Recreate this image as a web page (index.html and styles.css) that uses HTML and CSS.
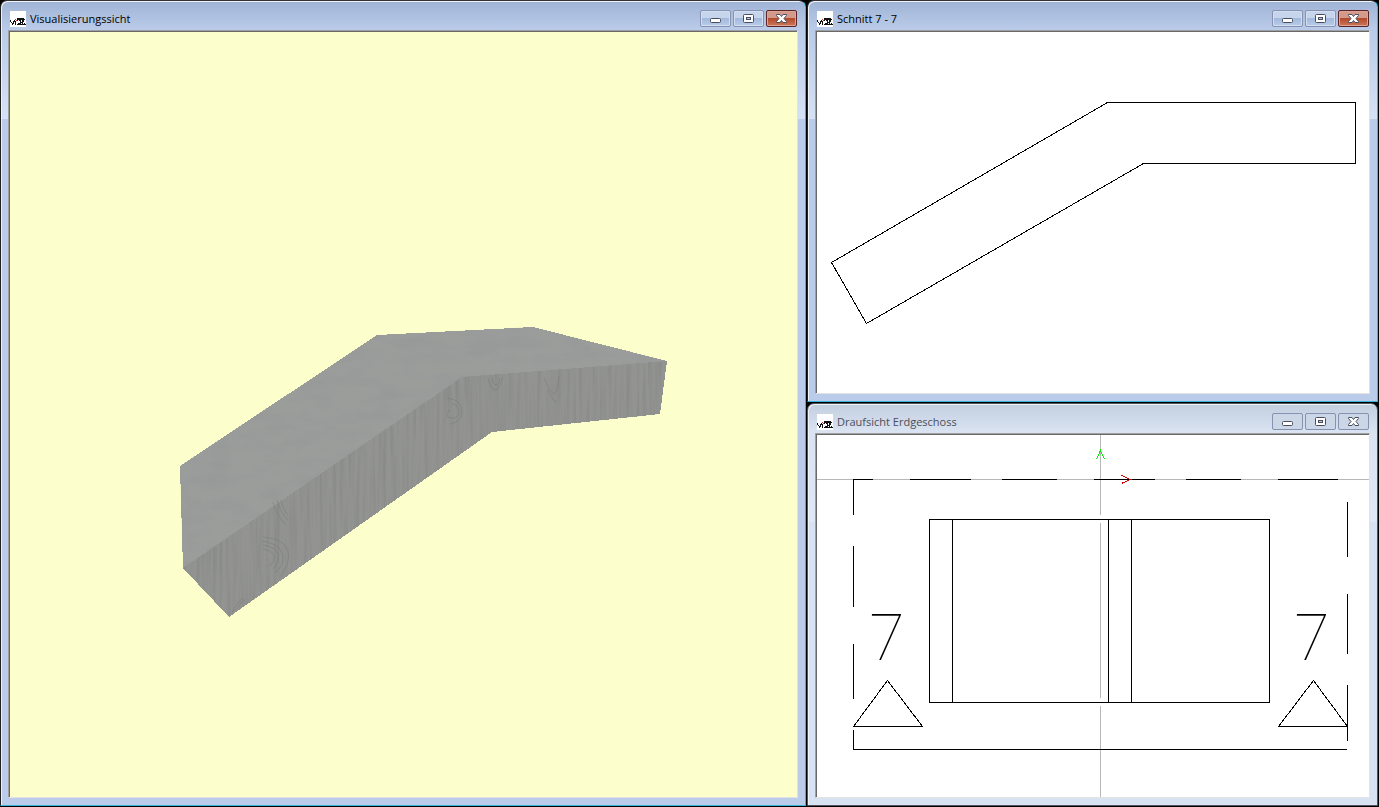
FILE: index.html
```
<!DOCTYPE html>
<html lang="de">
<head>
<meta charset="utf-8">
<title>Visualisierungssicht</title>
<link rel="stylesheet" href="styles.css">
</head>
<body>

<!-- shared symbols -->
<svg class="defs" width="0" height="0" aria-hidden="true">
  <symbol id="logo" viewBox="0 0 16 16" shape-rendering="crispEdges">
    <rect width="16" height="16" fill="#fff"/>
    <path d="M0 9h1v2h1v1h1v-2h1v-1h1v2h-1v2h-1v1h-1v-2h-1v-1h-1z M5 10h1v4h-1z M7 7h7v1h1v1h-1v2h-1v2h2v1h-8v-1h1v-1h1v-1h1v-1h-3z M14 12h1v1h1v1h-2z" fill="#111"/>
    <path d="M5 8h1v1h-1z M6 9h1v1h-1z" fill="#d33"/>
    <path d="M8 9h1v1h-1z M11 9h1v2h-1z M11 12h1v1h-1z M9 11h1v1h-1z" fill="#fff"/>
  </symbol>
  <symbol id="min" viewBox="0 0 13 11">
    <rect x="1.5" y="5.5" width="10" height="4" rx="1" fill="#fff" stroke="#4a4d5e"/>
  </symbol>
  <symbol id="max" viewBox="0 0 13 11">
    <rect x="1.5" y="1.5" width="10" height="8" rx="1" fill="#fff" stroke="#4a4d5e"/>
    <rect x="4.5" y="4.5" width="4" height="2" fill="#b9cbe4" stroke="#4a4d5e"/>
  </symbol>
  <symbol id="close" viewBox="0 0 13 11">
    <path d="M1.5 1.5h3.500l1.500 2l1.500-2h3.500v1l-2.500 3l2.500 3v1h-3.500l-1.500-2l-1.500 2h-3.500v-1l2.500-3l-2.500-3z" fill="#fff" stroke="#4a4d5e" stroke-linejoin="round"/>
  </symbol>
</svg>

<main class="desktop">

  <section class="window active wide">
    <header class="titlebar">
      <svg class="logo"><use href="#logo"/></svg>
      <h1 class="title">Visualisierungssicht</h1>
      <button class="btn" type="button" aria-label="Minimieren"><svg class="glyph"><use href="#min"/></svg></button>
      <button class="btn" type="button" aria-label="Maximieren"><svg class="glyph"><use href="#max"/></svg></button>
      <button class="btn close" type="button" aria-label="Schließen"><svg class="glyph"><use href="#close"/></svg></button>
    </header>
    <div class="view yellow">
      <svg class="drawing" viewBox="10 32 787 765">
        <defs>
          <filter id="grainTop" x="0" y="0" width="100%" height="100%">
            <feTurbulence type="fractalNoise" baseFrequency="0.03 0.08" numOctaves="4" seed="4"/>
            <feColorMatrix values="0 0 0 0 .28  0 0 0 0 .3  0 0 0 0 .3  1 0 0 0 -.36"/>
            <feComposite in2="SourceGraphic" operator="in"/>
          </filter>
          <filter id="grainSide" x="0" y="0" width="100%" height="100%">
            <feTurbulence type="fractalNoise" baseFrequency="0.3 0.012" numOctaves="3" seed="9"/>
            <feColorMatrix values="0 0 0 0 .22  0 0 0 0 .23  0 0 0 0 .22  1.3 0 0 0 -.5"/>
            <feComposite in2="SourceGraphic" operator="in"/>
          </filter>
        </defs>
        <g shape-rendering="crispEdges">
          <path d="M180 466L377 335L533 327L667 361L462 377L183 568z" fill="#9b9d9b"/>
          <path d="M183 568L462 377L667 361L660 414L492 432L229 617z" fill="#939492"/>
        </g>
        <path d="M180 466L377 335L533 327L667 361L462 377L183 568z" filter="url(#grainTop)"/>
        <path d="M183 568L462 377L667 361L660 414L492 432L229 617z" filter="url(#grainSide)"/>
        <g class="knot">
          <path d="M273 502q4 14 12 22M277 500q4 14 11 20M281 500q2 10 7 15"/>
          <path d="M262 541q16 2 20 12t-7 20M263 545q13 2 15 9t-5 15M263 549q10 2 11 7t-4 10M263 537q22 2 25 14t-8 26"/>
          <path d="M232 613q4-10 11-15M237 609q3-7 9-10"/>
          <path d="M451 403q8 2 8 9t-8 6t-1-8M447 398q15 2 15 13t-12 13"/>
          <path d="M488 378q3 12 7 12t8-13M492 378q1 7 4 7t4-7M544 378q7 16 10 16t5-18M548 390q5 12 9 12"/>
        </g>
      </svg>
    </div>
  </section>

  <section class="window active">
    <header class="titlebar">
      <svg class="logo"><use href="#logo"/></svg>
      <h2 class="title">Schnitt 7 - 7</h2>
      <button class="btn" type="button" aria-label="Minimieren"><svg class="glyph"><use href="#min"/></svg></button>
      <button class="btn" type="button" aria-label="Maximieren"><svg class="glyph"><use href="#max"/></svg></button>
      <button class="btn close" type="button" aria-label="Schließen"><svg class="glyph"><use href="#close"/></svg></button>
    </header>
    <div class="view">
      <svg class="drawing" viewBox="817 32 552 361">
        <path class="line" d="M831.5 262.5L1107.5 102.5H1355.5V163.5H1143.5L866.5 323.5z"/>
      </svg>
    </div>
  </section>

  <section class="window">
    <header class="titlebar">
      <svg class="logo"><use href="#logo"/></svg>
      <h2 class="title">Draufsicht Erdgeschoss</h2>
      <button class="btn" type="button" aria-label="Minimieren"><svg class="glyph"><use href="#min"/></svg></button>
      <button class="btn" type="button" aria-label="Maximieren"><svg class="glyph"><use href="#max"/></svg></button>
      <button class="btn" type="button" aria-label="Schließen"><svg class="glyph"><use href="#close"/></svg></button>
    </header>
    <div class="view">
      <svg class="drawing" viewBox="817 435 552 362">
        <!-- axes -->
        <path class="axis" d="M817 479.5H1369M1100.5 435V515M1100.5 523V698M1100.5 706V797"/>
        <!-- section line -->
        <path class="line" d="M853 479.5H873M910 479.5H971M1002 479.5H1057M1094 479.5H1155M1186 479.5H1241M1278 479.5H1338"/>
        <path class="line" d="M853.5 479V515M853.5 546V607M853.5 644V699M853.5 730V749.5H1347"/>
        <path class="line" d="M1347.5 502V557M1347.5 594V654M1347.5 685V741"/>
        <!-- slab -->
        <path class="line" d="M929.5 519.5H1269.5V702.5H929.5zM952.5 519V702M1108.5 519V702M1131.5 519V702"/>
        <!-- section marks -->
        <path class="line" d="M887.5 680.5L922.5 726.5H853.5zM1313.5 680.5L1347.5 726.5H1278.5z"/>
        <text class="mark" x="887" y="660">7</text>
        <text class="mark" x="1312" y="660">7</text>
        <path class="line green" d="M1096.5 459.5L1100.5 450.5L1104.5 459.5"/>
        <path class="line red" d="M1121.5 475.5L1130.5 479.5L1121.5 483.5"/>
      </svg>
    </div>
  </section>

</main>
</body>
</html>
```
FILE: styles.css
```
* {box-sizing: border-box;}
body {margin: 0; background: #000; font-family: "Open Sans", "Noto Sans", sans-serif;}
.defs {position: absolute;}

.desktop {display: grid; height: 100vh;
          grid-template-columns: 806fr 571fr;
          grid-template-rows: 402fr 403fr;
          gap: 1px; padding: 0 1px 1px 0;
          background: #000;
}
.wide {grid-row: 1 / 3;}

.window {display: flex; flex-direction: column;
         min-width: 0; min-height: 0;
         padding: 0 7px 7px;
         border: 1px solid #50545c;
         border-radius: 7px 7px 0 0;
         background: linear-gradient(#c3cedf, #d9e3f2 28px, #dfe8f5 118px, #d7e2f2 118px);
         box-shadow: inset 1px 1px #eef3fa;
}
.window.active {border-color: #333 #38b4dc #38b4dc #222;
                background: linear-gradient(#9fb3d5, #b9cbe8 28px, #d6e2f4 118px, #bacce9 118px);
}

.titlebar {display: flex; align-items: center; flex: none;
           height: 29px; padding: 6px 1px 0 2px;
}
.logo {width: 16px; height: 16px;}
.title {flex: 1; margin: 0 0 0 4px;
        font-size: 11px; font-weight: normal; line-height: 16px; color: #4b4f58;
        white-space: nowrap;
}
.active .title {color: #000;}

.btn {display: flex; align-items: center; justify-content: center;
      width: 31px; height: 17px; padding: 0; margin-left: 2px;
      border: 1px solid #8791b0; border-radius: 2px;
      background: #cbd6e6;
}
.active .btn {background: linear-gradient(#c6d5ec 50%, #a3b9dc 50%, #b8cdea);
              box-shadow: inset 0 0 0 1px #d3dff0;
}
.active .close {border-color: #5b2426;
                background: linear-gradient(#d39a8c 50%, #b34a2d 50%, #cc7758);
                box-shadow: inset 0 0 0 1px #dca494;
}
.glyph {flex: none; width: 13px; height: 11px;}

.view {flex: 1; min-height: 0; overflow: hidden;
       border: 1px solid; border-color: #a0a0a0 #e3e3e3 #e3e3e3 #a0a0a0;
       box-shadow: inset 1px 1px #696969;
       background: #fff;
       padding: 1px 0 0 1px;
}
.yellow {background: #fcffcb;}
.drawing {display: block; width: 100%; height: 100%;}

.line {fill: none; stroke: #000; shape-rendering: crispEdges;}
.axis {fill: none; stroke: #b8b8b8; shape-rendering: crispEdges;}
.green {stroke: #0e0;}
.red {stroke: #d00;}
.knot {fill: none; stroke: #777a78; stroke-opacity: 0.5;}
.mark {font-family: Roboto, sans-serif; font-weight: 100; font-size: 64px; text-anchor: middle;}
```
